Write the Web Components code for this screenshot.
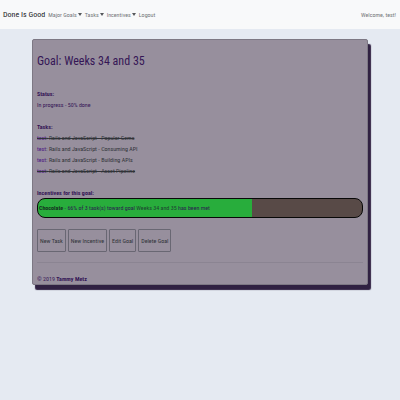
<!DOCTYPE html>
<html lang="en">
<head>
<meta charset="utf-8">
<title>Done Is Good</title>
<style>
body{margin:0;min-height:100vh;background:#e5eaf2;color:#351656;font:6px/11px "Roboto Condensed","Liberation Sans",Arial,sans-serif}
main{padding:10px 8% 20px}
</style>
</head>
<body>
<site-nav brand="Done Is Good" user="Welcome, test!">
  <nav-link menu>Major Goals</nav-link>
  <nav-link menu>Tasks</nav-link>
  <nav-link menu>Incentives</nav-link>
  <nav-link>Logout</nav-link>
</site-nav>
<main>
  <goal-card heading="Goal: Weeks 34 and 35">
    <goal-section label="Status:">In progress - 50% done</goal-section>
    <goal-section label="Tasks:">
      <task-row done owner="test">Rails and JavaScript - Popular Gems</task-row>
      <task-row owner="test">Rails and JavaScript - Consuming API</task-row>
      <task-row owner="test">Rails and JavaScript - Building APIs</task-row>
      <task-row done owner="test">Rails and JavaScript - Asset Pipeline</task-row>
    </goal-section>
    <goal-section label="Incentives for this goal:">
      <incentive-bar name="Chocolate" percent="66" total="3" goal="Weeks 34 and 35"></incentive-bar>
    </goal-section>
    <action-button slot="actions">New Task</action-button>
    <action-button slot="actions">New Incentive</action-button>
    <action-button slot="actions">Edit Goal</action-button>
    <action-button slot="actions">Delete Goal</action-button>
    <span slot="footer">© 2019 <b>Tammy Metz</b></span>
  </goal-card>
</main>
<script>
const define = (name, render) => customElements.define(name, class extends HTMLElement {
  connectedCallback() {
    if (!this.shadowRoot) this.attachShadow({ mode: 'open' }).innerHTML = render(this);
  }
});

define('site-nav', el => `<style>
:host{display:block;background:#f8f9fa}
nav{display:flex;align-items:center;height:29px;padding:0 4px 0 3px;color:#75777a}
.brand{font-size:8px;color:#202224;text-decoration:none;margin-right:3px;white-space:nowrap}
.links{display:flex;gap:3px;flex:1}
</style><nav><a class="brand" href="#">${el.getAttribute('brand')}</a><div class="links"><slot></slot></div><span>${el.getAttribute('user')}</span></nav>`);

define('nav-link', el => `<style>
:host{display:block;white-space:nowrap}
a{display:flex;align-items:center;gap:1px;color:#75777a;text-decoration:none}
i{border:solid transparent;border-width:3px 2px 0;border-top-color:#55585c}
</style><a href="#"><slot></slot>${el.hasAttribute('menu') ? '<i></i>' : ''}</a>`);

define('goal-card', el => `<style>
:host{display:block;background:#978f9d;border:1px solid #7d7884;border-radius:2px;box-shadow:3px 5px 1px #302142;padding:9px 4px 0}
h1{margin:0 0 15px;font-size:12px;line-height:24px;font-weight:400}
.actions{display:flex;flex-wrap:wrap;gap:2px}
footer{margin-top:10px;border-top:1px solid #8b8492;padding:10px 0 0}
</style><h1>${el.getAttribute('heading')}</h1><slot></slot><div class="actions"><slot name="actions"></slot></div><footer><slot name="footer"></slot></footer>`);

define('goal-section', el => `<style>
:host{display:block;margin-bottom:11px}
h2{margin:0;font-size:inherit;line-height:inherit;font-weight:700}
</style><h2>${el.getAttribute('label')}</h2><slot></slot>`);

define('task-row', el => `<style>
:host{display:block;color:#303338}
:host([done]){text-decoration:line-through}
a{color:#4b1483;text-decoration:none}
</style><a href="#">${el.getAttribute('owner')}</a>: <slot></slot>`);

define('incentive-bar', el => `<style>
:host{display:block;border:1px solid #080808;border-radius:8px;overflow:hidden;color:#2b1c50;
background:linear-gradient(to right,#28ad3c ${el.getAttribute('percent')}%,#584a47 0);padding:0 1px;line-height:18px}
a{color:#1d4331;text-decoration:none}
b{color:#14341f}
</style><b>${el.getAttribute('name')}</b> - ${el.getAttribute('percent')}% of ${el.getAttribute('total')} task(s) toward goal <a href="#">${el.getAttribute('goal')}</a> has been met`);

define('action-button', () => `<style>
:host{display:block}
button{display:block;font:inherit;line-height:21px;color:#303338;background:none;border:1px solid #696773;border-radius:1px;padding:0 2px;white-space:nowrap}
</style><button type="button"><slot></slot></button>`);
</script>
</body>
</html>
